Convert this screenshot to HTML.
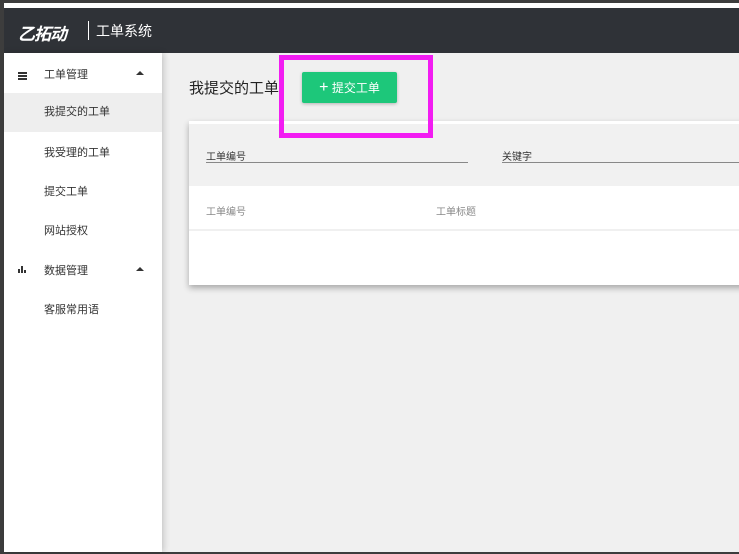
<!DOCTYPE html>
<html><head><meta charset="utf-8"><style>
*{margin:0;padding:0;box-sizing:border-box}
body{width:739px;height:554px;overflow:hidden;background:#3d3d3d;font-family:"Liberation Sans","Noto Sans CJK SC",sans-serif;position:relative}
.abs{position:absolute}
.white{left:4px;top:3px;width:735px;height:5px;background:#fff}
.hdr{left:4px;top:8px;width:735px;height:45px;background:#2f3237;color:#fff}
.main{left:4px;top:53px;width:735px;height:499px;background:#f0f0f0}
.side{left:4px;top:53px;width:158px;height:499px;background:#fff;box-shadow:2px 0 6px rgba(0,0,0,.18)}
.si{position:absolute;left:0;width:158px;height:39px;font-size:11px;color:#333;line-height:39px;padding-left:40px}
.card{left:189px;top:121px;width:560px;height:164px;background:#fff;box-shadow:0 3px 6px rgba(0,0,0,.3)}
</style></head><body>
<div class="abs white"></div>
<div class="abs hdr">
 <div class="abs" style="left:14px;top:12px;font-size:17px;font-style:italic;font-weight:bold;letter-spacing:-1px;color:#fff">乙拓动</div>
 <div class="abs" style="left:84px;top:13px;width:1px;height:19px;background:#fff"></div>
 <div class="abs" style="left:92px;top:13px;font-size:14px;color:#fff">工单系统</div>
</div>
<div class="abs main"></div>
<div class="abs side">
 <div class="si" style="top:3px">工单管理</div>
 <div class="abs" style="left:14px;top:19px;width:9px;height:2px;background:#333;box-shadow:0 3px 0 #333,0 6px 0 #333"></div>
 <div class="abs" style="left:132px;top:18px;width:0;height:0;border-left:4px solid transparent;border-right:4px solid transparent;border-bottom:4px solid #333"></div>
 <div class="si" style="top:40px;background:#eee">我提交的工单</div>
 <div class="si" style="top:81px">我受理的工单</div>
 <div class="si" style="top:120px">提交工单</div>
 <div class="si" style="top:159px">网站授权</div>
 <div class="si" style="top:199px">数据管理</div>
 <div class="abs" style="left:14px;top:216px;width:2px;height:4px;background:#333"></div>
 <div class="abs" style="left:17px;top:213px;width:2px;height:7px;background:#333"></div>
 <div class="abs" style="left:20px;top:217px;width:2px;height:3px;background:#333"></div>
 <div class="abs" style="left:132px;top:214px;width:0;height:0;border-left:4px solid transparent;border-right:4px solid transparent;border-bottom:4px solid #333"></div>
 <div class="si" style="top:238px">客服常用语</div>
</div>
<div class="abs" style="left:189px;top:77px;font-size:15px;color:#222">我提交的工单</div>
<div class="abs" style="left:302px;top:72px;width:95px;height:31px;background:#1dc77a;border-radius:2px;box-shadow:0 1px 3px rgba(0,0,0,.25);color:#fff;font-size:12px;line-height:31px;text-align:center"><span style="font-size:16px">+</span> 提交工单</div>
<div class="abs card">
 <div class="abs" style="left:0;top:0;width:560px;height:65px;background:#f1f1f1;border-top:3px solid #fff"></div>
 <div class="abs" style="left:17px;top:27px;font-size:10px;color:#333">工单编号</div>
 <div class="abs" style="left:17px;top:41px;width:262px;height:1px;background:#888"></div>
 <div class="abs" style="left:313px;top:27px;font-size:10px;color:#333">关键字</div>
 <div class="abs" style="left:313px;top:41px;width:260px;height:1px;background:#888"></div>
 <div class="abs" style="left:17px;top:82px;font-size:10px;color:#888">工单编号</div>
 <div class="abs" style="left:247px;top:82px;font-size:10px;color:#888">工单标题</div>
 <div class="abs" style="left:0;top:108px;width:560px;height:2px;background:#f0f0f0"></div>
</div>
<div class="abs" style="left:279px;top:55px;width:154px;height:83px;border:5px solid #f21cf2"></div>
</body></html>
